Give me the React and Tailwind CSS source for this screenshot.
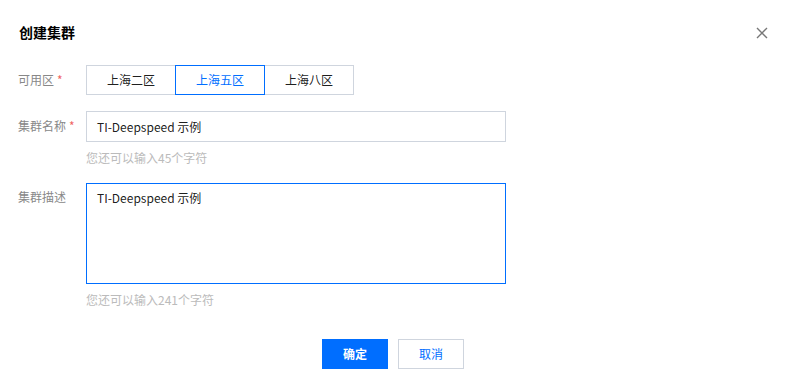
import React from "react";

export default function App() {
  const font = { fontFamily: '"Noto Sans CJK SC", "Liberation Sans", sans-serif' };
  return (
    <div className="w-[785px] h-[386px] bg-white text-[12px] text-[#000000e6] relative" style={font}>
      <div className="flex items-center justify-between pl-[19px] pr-[17px] pt-[20px] h-[44px]">
        <div className="text-[14px] font-bold leading-[20px] text-black">创建集群</div>
        <svg width="12" height="12" viewBox="0 0 12 12" className="mt-[2px]">
          <path d="M1 1L11 11M11 1L1 11" stroke="#777" strokeWidth="1.4" />
        </svg>
      </div>
      <div className="pl-[18px] pt-[21px]">
        <div className="flex h-[30px] items-center">
          <div className="w-[68px] text-[#888] leading-[30px]">
            可用区<span className="text-[#f06464] ml-[3px]">*</span>
          </div>
          <div className="flex">
            <div className="w-[90px] h-[30px] border border-[#cfd5de] flex items-center justify-center">上海二区</div>
            <div className="w-[90px] h-[30px] border border-[#006eff] -ml-px flex items-center justify-center text-[#006eff] relative">上海五区</div>
            <div className="w-[90px] h-[30px] border border-[#cfd5de] -ml-px flex items-center justify-center">上海八区</div>
          </div>
        </div>
        <div className="flex mt-[16px]">
          <div className="w-[68px] text-[#888] leading-[30px]">
            集群名称<span className="text-[#f06464] ml-[3px]">*</span>
          </div>
          <div>
            <div className="w-[420px] h-[31px] border border-[#cfd5de] flex items-center pl-[10px]">TI-Deepspeed 示例</div>
            <div className="text-[#bbb] leading-[18px] mt-[7px]">您还可以输入45个字符</div>
          </div>
        </div>
        <div className="flex mt-[16px]">
          <div className="w-[68px] text-[#888] leading-[30px] -mt-[1px]">集群描述</div>
          <div>
            <div className="w-[420px] h-[101px] border border-[#006eff] pl-[10px] pt-[5px] leading-[18px]">TI-Deepspeed 示例</div>
            <div className="text-[#bbb] leading-[18px] mt-[7px]">您还可以输入241个字符</div>
          </div>
        </div>
      </div>
      <div className="flex justify-center gap-[10px] mt-[30px] pl-[1px]">
        <div className="w-[66px] h-[30px] bg-[#006eff] text-white flex items-center justify-center font-bold">确定</div>
        <div className="w-[66px] h-[30px] border border-[#cfd5de] text-[#006eff] flex items-center justify-center">取消</div>
      </div>
    </div>
  );
}
